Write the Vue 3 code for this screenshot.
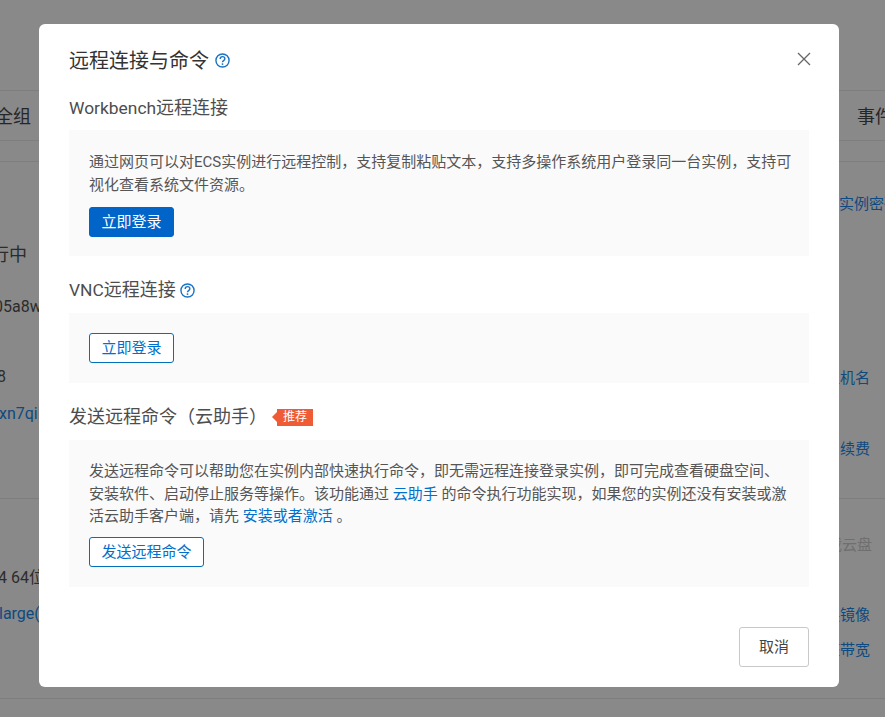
<script setup>
</script>

<template>
  <div class="page">
    <div class="under">
      <div class="h90"></div>
      <div class="u-row tabs"><span class="edge-tab-l">安全组</span><span class="edge-tab-r">事件</span></div>
      <div class="h21 lined"></div>
      <div class="u-row r1"><span></span><span class="edge-pw link">实例密码</span></div>
      <div class="u-row r2"><span class="edge-run big">运行中</span><span></span></div>
      <div class="u-row r3"><span class="edge-id">05a8w</span><span></span></div>
      <div class="u-row r4"><span class="edge-num">8</span><span class="edge-r link">主机名</span></div>
      <div class="u-row r5"><span class="edge-xn link">xn7qii</span><span></span></div>
      <div class="u-row r6"><span></span><span class="edge-r link">续费</span></div>
      <div class="h27 lined"></div>
      <div class="u-row r7"><span></span><span class="edge-r2 muted">挂载云盘</span></div>
      <div class="u-row r8"><span class="edge-os">4 64位</span><span></span></div>
      <div class="u-row r9"><span class="edge-large link">large(</span><span class="edge-r link">更换镜像</span></div>
      <div class="u-row r10"><span></span><span class="edge-r link">调整带宽</span></div>
      <div class="h30 lined"></div>
    </div>

    <div class="overlay">
      <section class="dialog">
        <header class="head">
          <h2 class="title">远程连接与命令</h2>
          <svg class="help" viewBox="0 0 16 16" aria-hidden="true">
            <circle cx="8" cy="8" r="7" fill="none" stroke="currentColor" stroke-width="1.5" />
            <path d="M5.5 6.3c0-1.5 1.1-2.4 2.5-2.4s2.5.9 2.5 2.2c0 2-2.5 1.9-2.5 3.7" fill="none" stroke="currentColor" stroke-width="1.5" />
            <circle cx="8" cy="11.8" r="1" fill="currentColor" />
          </svg>
          <svg class="close" viewBox="0 0 14 14" aria-hidden="true">
            <path d="M1 1l12 12M13 1L1 13" fill="none" stroke="currentColor" stroke-width="1.3" />
          </svg>
        </header>

        <div class="sec-title first"><span class="latin">Workbench</span>远程连接</div>
        <div class="panel p1">
          <p>通过网页可以对ECS实例进行远程控制，支持复制粘贴文本，支持多操作系统用户登录同一台实例，支持可视化查看系统文件资源。</p>
          <button class="btn primary">立即登录</button>
        </div>

        <div class="sec-title"><span class="latin">VNC</span>远程连接
          <svg class="help small" viewBox="0 0 16 16" aria-hidden="true">
            <circle cx="8" cy="8" r="7" fill="none" stroke="currentColor" stroke-width="1.5" />
            <path d="M5.5 6.3c0-1.5 1.1-2.4 2.5-2.4s2.5.9 2.5 2.2c0 2-2.5 1.9-2.5 3.7" fill="none" stroke="currentColor" stroke-width="1.5" />
            <circle cx="8" cy="11.8" r="1" fill="currentColor" />
          </svg>
        </div>
        <div class="panel p2">
          <button class="btn outline">立即登录</button>
        </div>

        <div class="sec-title third">发送远程命令（云助手）<span class="tag">推荐</span></div>
        <div class="panel p3">
          <p>发送远程命令可以帮助您在实例内部快速执行命令，即无需远程连接登录实例，即可完成查看硬盘空间、安装软件、启动停止服务等操作。该功能通过 <a>云助手</a> 的命令执行功能实现，如果您的实例还没有安装或激活云助手客户端，请先 <a>安装或者激活</a> 。</p>
          <button class="btn outline wide">发送远程命令</button>
        </div>

        <footer class="foot">
          <button class="btn cancel">取消</button>
        </footer>
      </section>
    </div>
  </div>
</template>

<style>
html, body { margin: 0; background: #898989; }
</style>

<style scoped>
.page {
  position: relative;
  width: 885px;
  height: 717px;
  overflow: hidden;
  background: #898989;
  font-family: Roboto, "Noto Sans CJK SC", sans-serif;
  color: #333;
}
.under { display: flex; flex-direction: column; color: #2c2c2c; font-size: 15px; }
.h90 { height: 90px; }
.h21 { height: 21px; box-sizing: border-box; }
.h27 { height: 27px; box-sizing: border-box; }
.h30 { height: 30px; box-sizing: border-box; }
.lined { border-bottom: 1px solid #7e7e7e; }
.u-row { display: flex; justify-content: space-between; align-items: center; white-space: nowrap; flex: none; }
.u-row span { margin-bottom: 2px; }
.tabs { box-sizing: border-box; height: 51px; font-size: 18px; border-top: 1px solid #7e7e7e; border-bottom: 1px solid #7e7e7e; color: #262626; }
.edge-tab-l { margin-left: -23px; }
.edge-tab-r { margin-right: -8px; }
.edge-pw { margin-right: -14px; }
.edge-run { margin-left: -27px; }
.edge-id { margin-left: -6px; font-size: 16px; }
.edge-num { margin-left: -3px; font-size: 16px; }
.edge-xn { margin-left: -1px; font-size: 16px; }
.edge-os { margin-left: -2px; font-size: 16px; }
.edge-large { margin-left: -1px; font-size: 16px; }
.edge-r { margin-right: 15px; }
.edge-r2 { margin-right: 13px; }
.r1 { height: 82px; }
.r2 { height: 20px; }
.r3 { height: 86px; }
.r4 { height: 54px; }
.r5 { height: 20px; }
.r6 { height: 48px; }
.r7 { height: 22px; margin-top: 34px; }
.r8 { height: 44px; }
.r9 { height: 30px; }
.r10 { height: 40px; }
.big { font-size: 18px; }
.link { color: #0e4a80; }
.muted { color: #6f6f6f; }

.overlay {
  position: absolute;
  inset: 0;
  display: flex;
  justify-content: center;
  align-items: flex-start;
  padding: 24px 7px 0 0;
}
.dialog {
  box-sizing: border-box;
  width: 800px;
  height: 663px;
  background: #fff;
  border-radius: 6px;
  padding: 0 30px;
  display: flex;
  flex-direction: column;
}
.head { display: flex; align-items: center; height: 72px; flex: none; }
.title { margin: 2px 0 0; font-size: 20px; font-weight: 400; color: #333; line-height: 70px; }
.help { width: 15px; height: 15px; margin-left: 6px; color: #1a73c4; flex: none; }
.help.small { vertical-align: -2px; margin-left: 0; }
.close { width: 14px; height: 14px; margin-left: auto; margin-right: -2px; color: #666; flex: none; margin-top: -2px; }
.sec-title { font-size: 18px; color: #4d4d4d; line-height: 24px; flex: none; }
.sec-title:not(.first) { margin-top: 22px; }
.latin { font-size: 17.4px; }
.panel { background: #fafafb; padding: 20px 17px 20px 20px; box-sizing: border-box; flex: none; }
.panel p { margin: 0; font-size: 15px; line-height: 22.5px; color: #555; }
.panel a { color: #0070cc; }
.p1 { margin-top: 10px; height: 126px; padding-top: 21px; }
.p1 .btn { margin-top: 11px; }
.p2 { margin-top: 11px; height: 70px; }
.p3 { margin-top: 11px; height: 147px; }
.p3 .btn { margin-top: 9.5px; }
.third { display: flex; align-items: center; }
.tag {
  position: relative;
  width: 36px;
  height: 17px;
  margin-left: 10px;
  background: #ee5b35;
  color: #fff;
  font-size: 12px;
  line-height: 17px;
  text-align: center;
}
.tag::before {
  content: "";
  position: absolute;
  left: -5px;
  top: 3px;
  border-style: solid;
  border-width: 5.5px 5px 5.5px 0;
  border-color: transparent #ee5b35 transparent transparent;
}
.btn {
  display: block;
  box-sizing: border-box;
  width: 85px;
  height: 30px;
  padding: 0;
  border-radius: 3px;
  font-family: inherit;
  font-size: 15px;
  line-height: 28px;
  cursor: pointer;
}
.primary { background: #0064c8; color: #fff; border: 1px solid #0064c8; }
.outline { background: #fff; color: #0070cc; border: 1px solid #0070b8; }
.wide { width: 115px; }
.foot { margin-top: auto; display: flex; justify-content: flex-end; padding-bottom: 20px; }
.cancel { width: 70px; height: 40px; background: #fff; border: 1px solid #c8c8c8; color: #444; line-height: 38px; }
</style>
